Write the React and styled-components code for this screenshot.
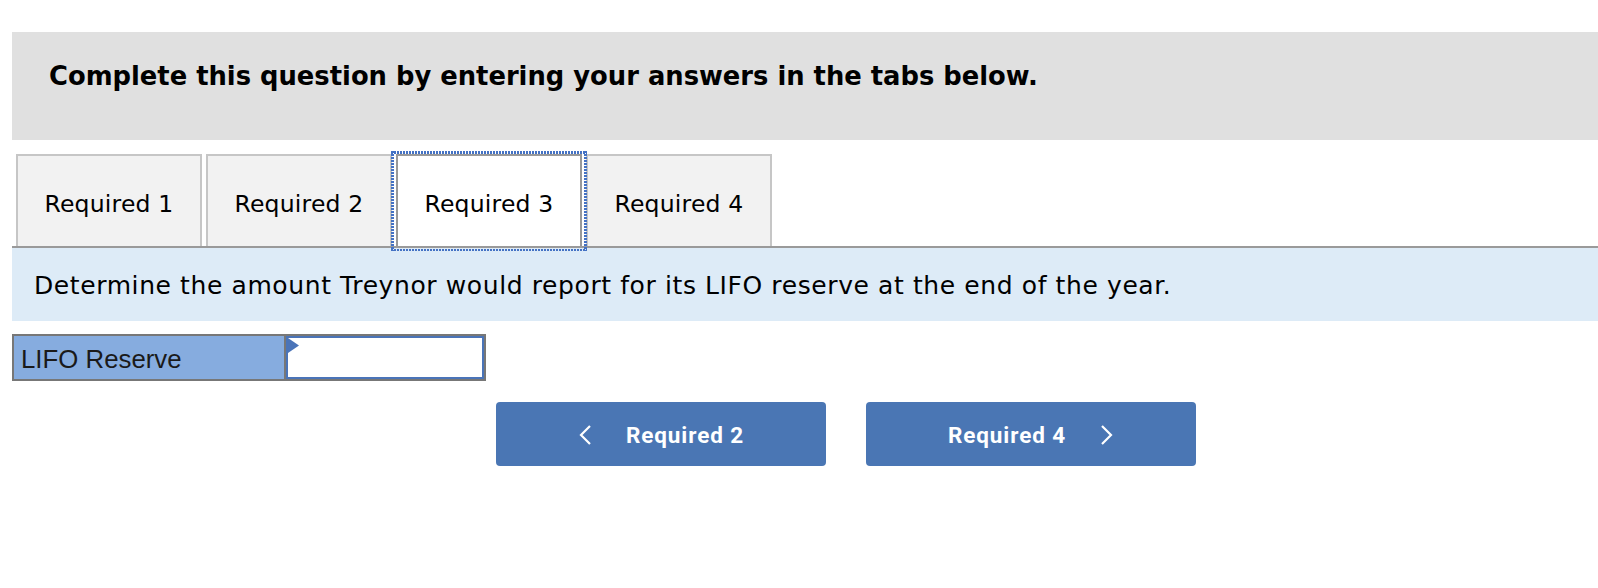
import React from 'react';
import styled, { createGlobalStyle } from 'styled-components';

const GlobalStyle = createGlobalStyle`
  html, body {
    margin: 0;
    padding: 0;
    background: #ffffff;
  }
  body {
    font-family: "DejaVu Sans", Verdana, sans-serif;
    color: #000;
  }
`;

const Page = styled.div`
  padding: 32px 0 0 12px;
  width: 1586px;
`;

const Instructions = styled.div`
  height: 108px;
  background: #e0e0e0;
  box-sizing: border-box;
  padding: 29px 0 0 37px;
  font-weight: bold;
  font-size: 25.8px;
  line-height: 30px;
`;

const TabRow = styled.div`
  display: flex;
  gap: 4px;
  margin-top: 14px;
  padding-left: 4px;
  border-bottom: 2px solid #9a9a9a;
`;

const dots = '#4472c4 0 2px, transparent 2px 3px';

const Tab = styled.button`
  width: 186px;
  height: 92px;
  box-sizing: border-box;
  border: 2px solid ${({ active }) => (active ? '#999999' : '#c6c6c6')};
  border-bottom: none;
  background: ${({ active }) => (active ? '#ffffff' : '#f2f2f2')};
  font-family: "DejaVu Sans", Verdana, sans-serif;
  font-size: 23.5px;
  letter-spacing: 0.2px;
  color: #000;
  padding: 6px 0 0;
  margin: 0;
  outline: none;
  cursor: pointer;
  position: relative;
  z-index: ${({ active }) => (active ? 1 : 0)};

  &::after {
    content: '';
    display: ${({ active }) => (active ? 'block' : 'none')};
    position: absolute;
    top: -5px;
    left: -7px;
    right: -7px;
    bottom: -5px;
    pointer-events: none;
    background:
      repeating-linear-gradient(90deg, ${dots}) top / 100% 3px no-repeat,
      repeating-linear-gradient(90deg, ${dots}) bottom / 100% 2px no-repeat,
      repeating-linear-gradient(180deg, ${dots}) left / 3px 100% no-repeat,
      repeating-linear-gradient(180deg, ${dots}) right / 3px 100% no-repeat;
  }
`;

const Prompt = styled.div`
  height: 73px;
  background: #ddebf7;
  box-sizing: border-box;
  padding: 24px 0 0 22px;
  font-size: 25px;
  letter-spacing: 0.6px;
  line-height: 28px;
`;

const AnswerRow = styled.div`
  display: flex;
  width: 474px;
  height: 47px;
  margin-top: 13px;
  box-sizing: border-box;
  border: 2px solid #777777;
`;

const Label = styled.div`
  width: 272px;
  background: #86acdf;
  border-right: 2px solid #777777;
  display: flex;
  align-items: center;
  padding: 3px 0 0 7px;
  box-sizing: border-box;
  font-family: "Liberation Sans", Arial, sans-serif;
  font-size: 25.8px;
  color: #1a1a1a;
`;

const InputWrap = styled.div`
  flex: 1;
  position: relative;
  border: 2px solid #4a74b8;
  background: #fff;
`;

const Flag = styled.svg`
  position: absolute;
  left: 0;
  top: 0;
`;

const Input = styled.input`
  width: 100%;
  height: 100%;
  border: none;
  outline: none;
  box-sizing: border-box;
  padding: 0 8px;
  font-size: 22px;
  background: transparent;
`;

const NavRow = styled.div`
  display: flex;
  gap: 40px;
  margin-top: 21px;
  padding-left: 484px;
`;

const NavButton = styled.button`
  width: 330px;
  height: 64px;
  border: none;
  border-radius: 4px;
  background: #4a76b4;
  color: #fff;
  display: flex;
  align-items: center;
  justify-content: center;
  gap: 34px;
  font-family: Roboto, "Noto Sans", sans-serif;
  font-weight: 700;
  font-size: 22.5px;
  letter-spacing: 0.9px;
  cursor: pointer;
  padding: 2px 0 0;
`;

const Chevron = ({ dir }) => (
  <svg width="14" height="20" viewBox="0 0 14 20">
    <path
      d={dir === 'left' ? 'M12 1 L3 10 L12 19' : 'M2 1 L11 10 L2 19'}
      fill="none"
      stroke="#fff"
      strokeWidth="2.2"
    />
  </svg>
);

const tabs = ['Required 1', 'Required 2', 'Required 3', 'Required 4'];

export default function App() {
  return (
    <>
      <GlobalStyle />
      <Page>
        <Instructions>Complete this question by entering your answers in the tabs below.</Instructions>
        <TabRow>
          {tabs.map((t, i) => (
            <Tab key={t} active={i === 2}>
              {t}
            </Tab>
          ))}
        </TabRow>
        <Prompt>Determine the amount Treynor would report for its LIFO reserve at the end of the year.</Prompt>
        <AnswerRow>
          <Label>LIFO Reserve</Label>
          <InputWrap>
            <Flag width="12" height="15" viewBox="0 0 12 15">
              <path d="M0 0 L11 7.5 L0 15 Z" fill="#4a74b8" />
            </Flag>
            <Input type="text" />
          </InputWrap>
        </AnswerRow>
        <NavRow>
          <NavButton>
            <Chevron dir="left" />
            <span>Required 2</span>
          </NavButton>
          <NavButton>
            <span>Required 4</span>
            <Chevron dir="right" />
          </NavButton>
        </NavRow>
      </Page>
    </>
  );
}
